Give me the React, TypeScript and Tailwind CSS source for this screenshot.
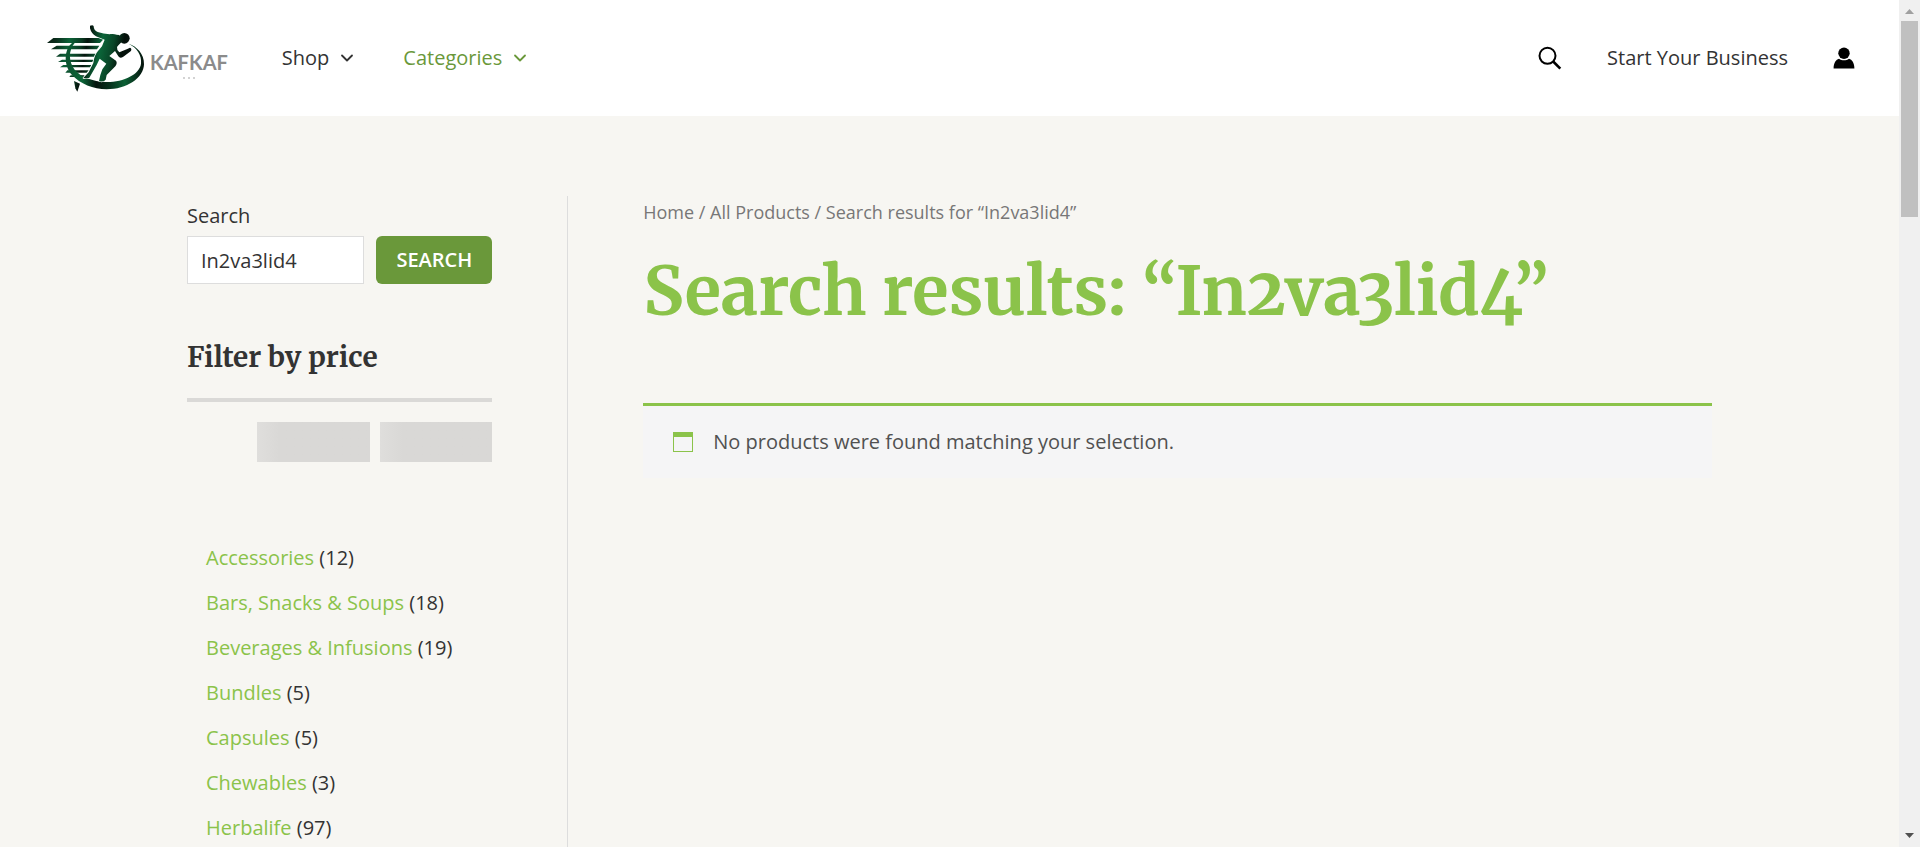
import { ChevronDown } from 'lucide-react';

const categories = [
  { name: 'Accessories', count: 12 },
  { name: 'Bars, Snacks & Soups', count: 18 },
  { name: 'Beverages & Infusions', count: 19 },
  { name: 'Bundles', count: 5 },
  { name: 'Capsules', count: 5 },
  { name: 'Chewables', count: 3 },
  { name: 'Herbalife', count: 97 },
];

function Logo() {
  return (
    <a href="#" aria-label="Kafkaf home" className="flex items-center gap-[5px]">
      <svg viewBox="45 30 300 210" className="h-[70px] w-[100px]" aria-hidden="true">
        <defs>
          <linearGradient id="metal" x1="50" y1="60" x2="342" y2="120" gradientUnits="userSpaceOnUse">
            <stop offset="0" stopColor="#0a1f14" />
            <stop offset="0.1" stopColor="#0a2a1a" />
            <stop offset="0.24" stopColor="#0c6238" />
            <stop offset="0.36" stopColor="#0a3a22" />
            <stop offset="0.42" stopColor="#05140d" />
            <stop offset="0.56" stopColor="#0b6539" />
            <stop offset="0.68" stopColor="#094527" />
            <stop offset="0.78" stopColor="#04100a" />
            <stop offset="0.9" stopColor="#08150f" />
            <stop offset="1" stopColor="#050f0a" />
          </linearGradient>
          <linearGradient id="ring" x1="110" y1="0" x2="342" y2="0" gradientUnits="userSpaceOnUse">
            <stop offset="0" stopColor="#0b5430" />
            <stop offset="0.2" stopColor="#0b6538" />
            <stop offset="0.38" stopColor="#05140d" />
            <stop offset="0.55" stopColor="#06301c" />
            <stop offset="0.75" stopColor="#0b6035" />
            <stop offset="1" stopColor="#05120c" />
          </linearGradient>
        </defs>
        <g fill="url(#metal)">
          <path d="M70 75H224L210 90H51Z" />
          <path d="M80 98H208L201 109H63Z" />
          <path d="M90 122H198L194 131H78Z" />
          <path d="M96 140H190L187 147H84Z" />
          <path d="M100 156H184L180 163H90Z" />
          <path d="M112 172H176L170 179H106Z" />
          <path d="M122 187H164L160 192H118Z" />
          <path d="M132 204L150 212L142 236L136 226Z" />
        </g>
        <path
          fill="url(#ring)"
          d="M126 90C100 112 102 160 126 186C150 212 190 229 230 229C290 229 341 196 342 154C343 122 320 100 296 92C320 104 336 126 333 152C329 184 280 208 228 207C188 205 152 192 134 170C116 146 114 114 134 90Z"
        />
        <g stroke="#fff" strokeWidth="4" strokeLinejoin="round" fill="url(#metal)" paintOrder="stroke">
          <path d="M180 38Q189 34 191 40Q191 52 203 57Q225 65 248 63Q263 65 268 72L268 88Q266 96 261 102Q260 112 268 118L292 108L300 104Q307 107 302 115L280 131Q270 138 265 130L255 114L238 129L258 143Q263 150 256 160L230 186L227 200Q219 209 207 204L211 186L217 169L229 152L209 137L200 156L178 194Q170 198 160 195L176 178L190 150Q192 128 204 114L216 100L224 80L198 70Q184 62 180 46Z" />
          <circle cx="283" cy="76" r="16" />
        </g>
        <path fill="url(#metal)" d="M240 64L268 66L278 84L262 100L236 90Z" />
      </svg>
      <span className="flex flex-col items-center gap-1 pt-4">
        <span className="font-['Lato',sans-serif] text-xl leading-5 font-bold text-[#8b8b8b]">KAFKAF</span>
        <svg viewBox="0 0 12 4" className="h-1 w-3" fill="#c4c4c4" aria-hidden="true">
          <circle cx="1" cy="2" r="1" />
          <circle cx="6" cy="2" r="1" />
          <circle cx="11" cy="2" r="1" />
        </svg>
      </span>
    </a>
  );
}

function Header() {
  return (
    <header className="flex h-[116px] shrink-0 items-center justify-between bg-white pr-11 pl-[45px]">
      <div className="flex items-center gap-[54px]">
        <Logo />
        <nav className="flex items-center gap-[46px]">
          <a href="#" className="flex items-center gap-2 text-[#333]">
            Shop
            <ChevronDown className="h-5 w-5" strokeWidth={2.2} />
          </a>
          <a href="#" className="flex items-center gap-2 text-[#6a983a]">
            Categories
            <ChevronDown className="h-5 w-5" strokeWidth={2.2} />
          </a>
        </nav>
      </div>
      <div className="flex items-center gap-[45px]">
        <button type="button" aria-label="Open search">
          <svg viewBox="0 0 24 24" className="h-6 w-6" fill="none" stroke="#000" strokeWidth="2" aria-hidden="true">
            <circle cx="9.5" cy="9.8" r="8" />
            <path d="M15.2 15.500L22.300 22.600" strokeWidth="2.6" />
          </svg>
        </button>
        <a href="#" className="text-[#333]">Start Your Business</a>
        <a href="#" aria-label="Account">
          <svg viewBox="0 0 22 22" className="h-[22px] w-[22px]" aria-hidden="true">
            <circle cx="11" cy="6.3" r="5.7" />
            <path d="M0.6 21.5C0.6 16 3 12.6 6 11.8C8.8 13.8 13.2 13.8 16 11.8C19 12.6 21.4 16 21.4 21.5Z" />
          </svg>
        </a>
      </div>
    </header>
  );
}

function Sidebar() {
  return (
    <aside className="w-1/4 shrink-0 border-r border-[#dddddd] pr-[75px]">
      <form className="pt-1" onSubmit={(event) => event.preventDefault()}>
        <label htmlFor="product-search" className="block pb-1 leading-8">Search</label>
        <div className="flex h-12 gap-3">
          <input
            id="product-search"
            type="search"
            defaultValue="In2va3lid4"
            className="w-0 grow border border-[#dddddd] bg-white px-[13px] pt-[2px] outline-none"
          />
          <button type="submit" className="rounded-md bg-[#6a983a] px-5 font-semibold text-white">SEARCH</button>
        </div>
      </form>
      <h2 className="mt-[55px] font-[Merriweather,'DejaVu_Serif',serif] text-[28px] leading-9 font-bold whitespace-nowrap">
        Filter by price
      </h2>
      <div className="mt-[23px] h-1 bg-[#dad9d7]" />
      <div className="mt-5 flex justify-end gap-[10px]">
        <div className="h-10 w-[113px] bg-linear-to-r from-[#dfdedc] to-[#d9d8d6] to-20%" />
        <div className="h-10 w-[112px] bg-linear-to-r from-[#dfdedc] to-[#d9d8d6] to-20%" />
      </div>
      <ul className="mt-[73px] pl-[19px]">
        {categories.map(({ name, count }) => (
          <li key={name} className="leading-[45px] whitespace-nowrap">
            <a href="#" className="text-[#8bc34a]">{name}</a> ({count})
          </li>
        ))}
      </ul>
    </aside>
  );
}

function Results() {
  return (
    <main className="grow pl-[75px]">
      <nav aria-label="Breadcrumb" className="text-lg leading-8 text-[#777]">
        <a href="#">Home</a> / <a href="#">All Products</a> / Search results for “In2va3lid4”
      </nav>
      <h1 className="mt-[22px] font-[Merriweather,'DejaVu_Serif',serif] text-[67px] leading-[83px] font-bold whitespace-nowrap text-[#8bc34a] [font-variant-numeric:oldstyle-nums]">
        Search results: “In2va3lid4”
      </h1>
      <div className="mt-[70px] flex h-[75px] items-start gap-5 border-t-[3px] border-[#8bc34a] bg-[#f5f5f6] px-[30px] pt-5 text-[#515151]">
        <span className="mt-[6px] h-5 w-5 border border-t-[5px] border-[#8bc34a]" />
        <p className="leading-8">No products were found matching your selection.</p>
      </div>
    </main>
  );
}

function Scrollbar() {
  return (
    <div className="flex w-[21px] shrink-0 flex-col items-center bg-[#f0f0f0]" aria-hidden="true">
      <svg viewBox="0 0 21 21" className="h-[21px] w-[21px]" fill="#a0a0a0">
        <path d="M6 14L10.500 9L15 14Z" />
      </svg>
      <div className="h-[196px] w-[17px] bg-[#c0c0c0]" />
      <svg viewBox="0 0 21 21" className="mt-auto h-[21px] w-[21px]" fill="#505050">
        <path d="M6 7L10.500 12L15 7Z" />
      </svg>
    </div>
  );
}

export default function App() {
  return (
    <div className="flex h-screen overflow-hidden bg-[#f7f6f2] font-['Open_Sans',sans-serif] text-xl text-[#333]">
      <div className="flex min-w-0 grow flex-col overflow-hidden">
        <Header />
        <div className="mx-auto mt-20 flex w-full max-w-[1525px] grow">
          <Sidebar />
          <Results />
        </div>
      </div>
      <Scrollbar />
    </div>
  );
}
